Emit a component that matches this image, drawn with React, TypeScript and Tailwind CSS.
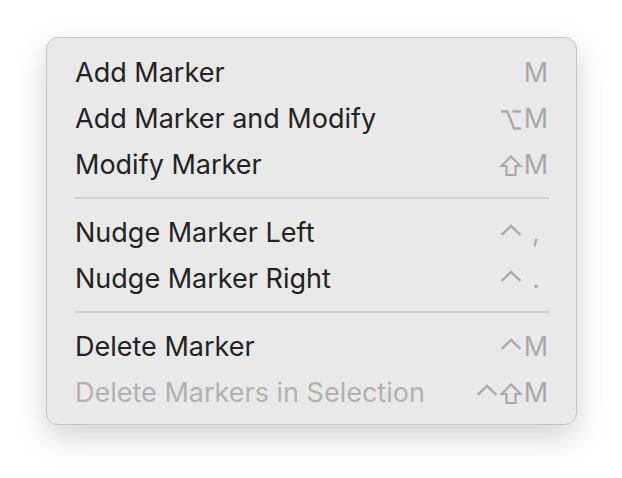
import React from "react";

type Mod = "ctrl" | "opt" | "shift";

type Item = {
  label: string;
  mods: Mod[];
  keyChar: string;
  disabled?: boolean;
};

const groups: Item[][] = [
  [
    { label: "Add Marker", mods: [], keyChar: "M" },
    { label: "Add Marker and Modify", mods: ["opt"], keyChar: "M" },
    { label: "Modify Marker", mods: ["shift"], keyChar: "M" },
  ],
  [
    { label: "Nudge Marker Left", mods: ["ctrl"], keyChar: "," },
    { label: "Nudge Marker Right", mods: ["ctrl"], keyChar: "." },
  ],
  [
    { label: "Delete Marker", mods: ["ctrl"], keyChar: "M" },
    { label: "Delete Markers in Selection", mods: ["ctrl", "shift"], keyChar: "M", disabled: true },
  ],
];

function ModGlyph({ mod }: { mod: Mod }) {
  if (mod === "ctrl") {
    return (
      <svg width="24" height="22" viewBox="0 0 24 22" fill="none" stroke="currentColor" strokeWidth="2.4" strokeLinecap="square">
        <path d="M3.5 11 L12 3 L20.5 11" />
      </svg>
    );
  }
  if (mod === "opt") {
    return (
      <svg width="24" height="22" viewBox="0 0 24 22" fill="none" stroke="currentColor" strokeWidth="2.4" strokeLinecap="butt">
        <path d="M2 2.5 H8.5 L15 19.5 H22" />
        <path d="M13.5 2.5 H22" />
      </svg>
    );
  }
  return (
    <svg width="24" height="22" viewBox="0 0 24 22" fill="none" stroke="currentColor" strokeWidth="2.2" strokeLinejoin="miter">
      <path d="M12 1.5 L21.5 11 H16.5 V20 H7.5 V11 H2.5 Z" />
    </svg>
  );
}

function Row({ item }: { item: Item }) {
  const textColor = item.disabled ? "text-[#b1b1b1]" : "text-[#232323]";
  return (
    <div className="flex h-[46px] items-center pl-[28px] pr-[27px]">
      <span className={`flex-1 ${textColor}`}>{item.label}</span>
      <span className="flex items-center text-[#a9a9a9]">
        {item.mods.map((m, i) => (
          <span key={i} className="flex w-[24px] justify-center pt-[1px]">
            <ModGlyph mod={m} />
          </span>
        ))}
        <span className="flex w-[26px] justify-center">{item.keyChar}</span>
      </span>
    </div>
  );
}

export default function App() {
  return (
    <div className="min-h-screen w-full bg-white pl-[46px] pt-[37px] font-['Inter','Liberation_Sans',sans-serif]">
      <div className="w-[531px] rounded-[12px] border border-[#c6c6c6] bg-[#e9e9e9] pb-[8px] pt-[12px] text-[27px] shadow-[0_12px_32px_rgba(0,0,0,0.18)]">
        {groups.map((group, gi) => (
          <div key={gi}>
            {gi > 0 ? (
              <div className="h-[22px] px-[27px] pt-[9px]">
                <div className="h-[2px] bg-[#d0d0d0]" />
              </div>
            ) : null}
            {group.map((item) => (
              <Row key={item.label} item={item} />
            ))}
          </div>
        ))}
      </div>
    </div>
  );
}
